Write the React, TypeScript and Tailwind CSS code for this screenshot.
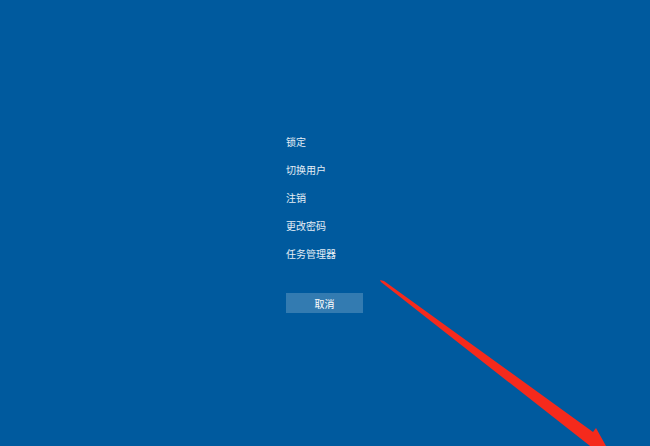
import React from "react";

const items = ["锁定", "切换用户", "注销", "更改密码", "任务管理器"];

export default function App() {
  return (
    <div
      className="relative w-[650px] h-[446px] overflow-hidden bg-[#005a9e] text-white"
      style={{ fontFamily: '"Noto Sans CJK SC", "Microsoft YaHei", sans-serif' }}
    >
      <div className="flex flex-col pl-[286px] pt-[135px]">
        <div className="flex flex-col gap-[14px]">
          {items.map((t) => (
            <div key={t} className="text-[10px] leading-[14px] text-white/90">
              {t}
            </div>
          ))}
        </div>
        <button className="mt-[32px] w-[77px] h-[20px] bg-white/20 text-[10px] text-white flex items-center justify-center">
          取消
        </button>
      </div>
      <svg className="absolute inset-0" width="650" height="446" viewBox="0 0 650 446">
        <polygon
          points="380,280 384,281 593,432 596,428 625,480 620,480 608,460 381,282"
          fill="#f52a1c"
        />
      </svg>
    </div>
  );
}
